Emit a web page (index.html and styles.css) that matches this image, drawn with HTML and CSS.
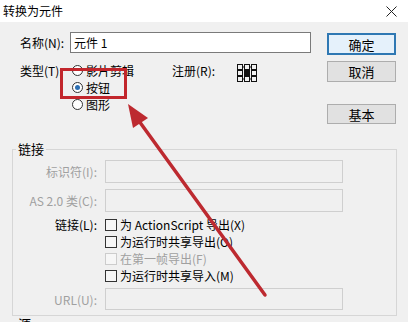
FILE: index.html
```html
<!DOCTYPE html>
<html lang="zh-CN">
<head>
<meta charset="utf-8">
<title>转换为元件</title>
<link rel="stylesheet" href="styles.css">
</head>
<body>
<div class="window">
  <div class="titlebar">
    <span class="title">转换为元件</span>
    <span class="close"><svg width="11" height="11" viewBox="0 0 11 11"><path d="M0.5 0.5L10.5 10.5M10.5 0.5L0.5 10.5" stroke="#222" stroke-width="1" fill="none"/></svg></span>
  </div>
  <div class="top">
    <div class="form">
      <div class="name-row">
        <span class="lbl">名称(N):</span>
        <div class="input-name">元件 1</div>
      </div>
      <div class="type-row">
        <span class="lbl">类型(T):</span>
        <div class="radios">
          <div class="radio"><span class="rb"></span><span>影片剪辑</span></div>
          <div class="radio"><span class="rb on"></span><span>按钮</span></div>
          <div class="radio"><span class="rb"></span><span>图形</span></div>
        </div>
        <span class="reg-lbl">注册(R):</span>
        <svg class="reg" width="21" height="19" viewBox="0 0 21 19">
          <g fill="none" stroke="#111" stroke-width="1">
            <rect x="0.5" y="0.5" width="5" height="5"/>
            <rect x="7.5" y="0.5" width="5" height="5"/>
            <rect x="14.5" y="0.5" width="5" height="5"/>
            <rect x="0.5" y="6.5" width="5" height="5"/>
            <rect x="14.5" y="6.5" width="5" height="5"/>
            <rect x="0.5" y="12.5" width="5" height="5"/>
            <rect x="7.5" y="12.5" width="5" height="5"/>
            <rect x="14.5" y="12.5" width="5" height="5"/>
            <path d="M5.5 3H7.5M12.5 3H14.5M5.5 15H7.5M12.5 15H14.5M3 5.5V6.5M17 5.5V6.5M3 11.5V12.5M17 11.5V12.5"/>
          </g>
          <rect x="7" y="6" width="6" height="6" fill="#111"/>
        </svg>
      </div>
    </div>
    <div class="buttons">
      <div class="btn default">确定</div>
      <div class="btn cancel">取消</div>
      <div class="btn basic">基本</div>
    </div>
  </div>
  <fieldset class="group">
    <legend>链接</legend>
    <div class="frow first">
      <span class="flbl dis">标识符(I):</span>
      <div class="input-dis"></div>
    </div>
    <div class="frow second">
      <span class="flbl dis">AS 2.0 类(C):</span>
      <div class="input-dis"></div>
    </div>
    <div class="checks">
      <div class="crow"><span class="flbl">链接(L):</span><span class="cb"></span><span>为 ActionScript 导出(X)</span></div>
      <div class="crow"><span class="flbl"></span><span class="cb"></span><span>为运行时共享导出(O)</span></div>
      <div class="crow"><span class="flbl"></span><span class="cb off"></span><span class="dis">在第一帧导出(F)</span></div>
      <div class="crow"><span class="flbl"></span><span class="cb"></span><span>为运行时共享导入(M)</span></div>
    </div>
    <div class="frow url">
      <span class="flbl dis">URL(U):</span>
      <div class="input-dis small"></div>
    </div>
  </fieldset>
  <div class="src">源</div>
  <div class="highlight"></div>
  <svg class="arrow" width="408" height="322" viewBox="0 0 408 322">
    <line x1="265" y1="295" x2="139" y2="121" stroke="#bd2a30" stroke-width="3.5" stroke-linecap="round"/>
    <polygon points="128,104 148,118 133,128" fill="#bd2a30"/>
  </svg>
</div>
</body>
</html>
```
FILE: styles.css
```css
* { box-sizing: border-box; }
html, body { margin: 0; padding: 0; }
body {
  width: 408px;
  height: 322px;
  overflow: hidden;
  background: #f0f0f0;
  font-family: "Noto Sans CJK SC", "Noto Sans", sans-serif;
  font-size: 12px;
  color: #000;
}
.window { position: relative; width: 408px; height: 322px; overflow: hidden; }

.titlebar {
  height: 22px;
  background: #fff;
  display: flex;
  align-items: center;
  justify-content: space-between;
  padding: 0 11px 0 3px;
}
.title { font-size: 12px; line-height: 14px; }
.close svg { display: block; margin-top: 0; }

.top { display: flex; padding: 10px 0 0 20px; }
.form { width: 291px; }
.name-row { display: flex; align-items: center; height: 21px; }
.lbl { width: 50px; line-height: 17px; }
.input-name {
  width: 241px;
  height: 21px;
  border: 1px solid #7a7a7a;
  background: #fff;
  padding-left: 3px;
  line-height: 19px;
}
.type-row { display: flex; align-items: flex-start; margin-top: 9px; }
.radios { margin-left: 2px; width: 100px; }
.radio { display: flex; align-items: center; height: 17px; line-height: 17px; }
.rb {
  width: 11px;
  height: 11px;
  border: 1px solid #333;
  border-radius: 50%;
  background: #fff;
  margin-right: 3px;
  display: flex;
  align-items: center;
  justify-content: center;
}
.rb.on::after {
  content: "";
  width: 5px;
  height: 5px;
  border-radius: 50%;
  background: #2c6fb3;
}
.reg-lbl { line-height: 17px; }
.reg { display: block; margin: 2px 0 0 22px; }

.buttons {
  margin-left: 16px;
  width: 69px;
  display: flex;
  flex-direction: column;
  padding-top: 1px;
}
.btn {
  height: 21px;
  border: 1px solid #adadad;
  background: #e1e1e1;
  display: flex;
  align-items: center;
  justify-content: center;
  font-size: 13px;
  line-height: 15px;
}
.btn.default { height: 22px; border: 2px solid #2f78b3; background: #e5f1fb; }
.btn.cancel { margin-top: 6px; }
.btn.basic { margin-top: 22px; height: 20px; }

.group {
  margin: 18px 11px 0 12px;
  border: 1px solid #d6d6d6;
  padding: 0 0 5px 0;
  min-width: 0;
}
.group legend {
  margin-left: 3px;
  padding: 0 2px;
  font-size: 13px;
  line-height: 14px;
}
.frow { display: flex; align-items: center; }
.frow.first { margin-top: 4px; }
.frow.second { margin-top: 6px; }
.frow.url { margin-top: 4px; }
.flbl { width: 84px; margin-right: 8px; text-align: right; line-height: 17px; flex: none; }
.dis { color: #a0a0a0; }
.input-dis {
  width: 238px;
  height: 23px;
  border: 1px solid #cfcfcf;
  background: #f0f0f0;
}
.input-dis.small { height: 22px; }
.checks { margin-top: 4px; }
.crow { display: flex; align-items: center; height: 17px; line-height: 17px; }
.cb {
  width: 12px;
  height: 12px;
  border: 1px solid #333;
  background: #f6f6f6;
  margin-right: 3px;
  flex: none;
}
.cb.off { border-color: #cccccc; }

.src { margin: 1px 0 0 18px; font-size: 13px; line-height: 14px; }

.highlight {
  position: absolute;
  left: 60px;
  top: 68px;
  width: 67px;
  height: 31px;
  border: 3px solid #c2262c;
}
.arrow { position: absolute; left: 0; top: 0; }
```
